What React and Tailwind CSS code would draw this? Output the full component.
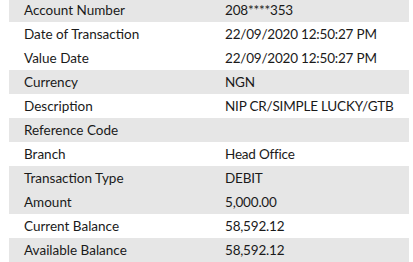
const rows = [
  ["Account Number", "208****353", true],
  ["Date of Transaction", "22/09/2020 12:50:27 PM", false],
  ["Value Date", "22/09/2020 12:50:27 PM", false],
  ["Currency", "NGN", true],
  ["Description", "NIP CR/SIMPLE LUCKY/GTB", false],
  ["Reference Code", "", true],
  ["Branch", "Head Office", false],
  ["Transaction Type", "DEBIT", true],
  ["Amount", "5,000.00", true],
  ["Current Balance", "58,592.12", false],
  ["Available Balance", "58,592.12", true],
];

export default function App() {
  return (
    <div className="w-[413px] h-[262px] overflow-hidden bg-white">
      <div className="-mt-[2px] ml-[9px] w-[400px] flex flex-col" style={{ fontFamily: "Lato, sans-serif" }}>
        {rows.map(([k, v, g], i) => (
          <div
            key={i}
            className={`grid grid-cols-[200px_1fr] h-[24px] items-center text-[13.5px] text-[#1a1a1a] ${g ? "bg-[#e6e6e6]" : "bg-white"}`}
          >
            <div className="pl-[15px]">{k}</div>
            <div className="pl-[16px] tracking-[-0.2px]">{v}</div>
          </div>
        ))}
      </div>
    </div>
  );
}
